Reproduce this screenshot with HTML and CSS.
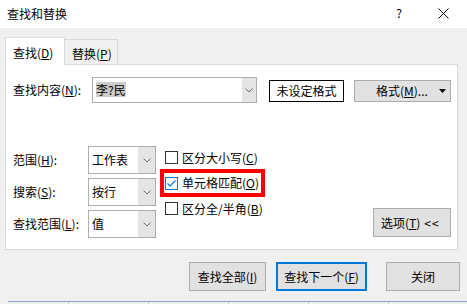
FILE: index.html
```html
<!DOCTYPE html>
<html lang="zh-CN">
<head>
<meta charset="utf-8">
<title>查找和替换</title>
<link rel="stylesheet" href="styles.css">
</head>
<body>
<div class="titlebar">
  <span class="title">查找和替换</span>
  <span class="help">?</span>
  <span class="close"><svg width="11" height="11" viewBox="0 0 11 11"><path d="M0.5 0.5L10.5 10.5M10.5 0.5L0.5 10.5" stroke="#000" stroke-width="1" fill="none"/></svg></span>
</div>
<div class="dialog">
  <div class="tabs">
    <div class="tab active">查找(<u>D</u>)</div>
    <div class="tab">替换(<u>P</u>)</div>
  </div>
  <div class="panel">
    <div class="find-row">
      <span class="find-label">查找内容(<u>N</u>):</span>
      <div class="combo find-combo">
        <span class="combo-text"><span class="sel">李?民</span></span>
        <span class="drop"><svg width="8" height="5" viewBox="0 0 8 5"><path d="M0.5 0.5L4 4L7.5 0.5" stroke="#707070" stroke-width="1" fill="none"/></svg></span>
      </div>
      <div class="format-preview">未设定格式</div>
      <button class="btn format-btn">格式(<u>M</u>)...<svg class="tri" width="7" height="4" viewBox="0 0 7 4"><path d="M0 0H7L3.5 4Z" fill="#000"/></svg></button>
    </div>
    <div class="options">
      <div class="fields">
        <span class="label">范围(<u>H</u>):</span>
        <div class="combo small-combo">
          <span class="combo-text">工作表</span>
          <span class="drop wide"><svg width="8" height="5" viewBox="0 0 8 5"><path d="M0.5 0.5L4 4L7.5 0.5" stroke="#707070" stroke-width="1" fill="none"/></svg></span>
        </div>
        <span class="label">搜索(<u>S</u>):</span>
        <div class="combo small-combo">
          <span class="combo-text">按行</span>
          <span class="drop wide"><svg width="8" height="5" viewBox="0 0 8 5"><path d="M0.5 0.5L4 4L7.5 0.5" stroke="#707070" stroke-width="1" fill="none"/></svg></span>
        </div>
        <span class="label">查找范围(<u>L</u>):</span>
        <div class="combo small-combo">
          <span class="combo-text">值</span>
          <span class="drop wide"><svg width="8" height="5" viewBox="0 0 8 5"><path d="M0.5 0.5L4 4L7.5 0.5" stroke="#707070" stroke-width="1" fill="none"/></svg></span>
        </div>
      </div>
      <div class="checks">
        <div class="check"><span class="box"></span>区分大小写(<u>C</u>)</div>
        <div class="check marked"><span class="box checked"><svg width="11" height="11" viewBox="0 0 11 11"><path d="M1.5 5.5L4 8L9.5 2.5" stroke="#0078d7" stroke-width="1.2" fill="none"/></svg></span>单元格匹配(<u>O</u>)</div>
        <div class="check"><span class="box"></span>区分全/半角(<u>B</u>)</div>
      </div>
      <button class="btn options-btn">选项(<u>T</u>)<span class="arrows">&lt;&lt;</span></button>
    </div>
  </div>
  <div class="actions">
    <button class="btn action a1">查找全部(<u>I</u>)</button>
    <button class="btn action a2 default">查找下一个(<u>F</u>)</button>
    <button class="btn action a3">关闭</button>
  </div>
</div>
<div class="taskstrip">
  <span class="cell first"></span>
  <span class="cell"></span>
  <span class="cell"></span>
  <span class="cell"></span>
  <span class="cell"></span>
  <span class="cell last"></span>
</div>
</body>
</html>
```

FILE: styles.css
```css
* { box-sizing: border-box; }
html, body { margin: 0; padding: 0; }
body {
  width: 467px;
  height: 304px;
  overflow: hidden;
  background: #f0f0f0;
  font-family: "Noto Sans CJK SC", "Microsoft YaHei", sans-serif;
  font-size: 12px;
  line-height: 16px;
  color: #000;
}
u {
  text-decoration-thickness: 1px;
  text-underline-offset: 1px;
}

.titlebar {
  height: 28px;
  background: #fff;
  display: flex;
  align-items: center;
}
.title { padding-left: 7px; margin-top: -1px; }
.help { margin-left: auto; margin-right: 36px; margin-top: -2px; }
.close { width: 11px; height: 11px; margin-right: 18px; margin-top: -2px; display: flex; }

.dialog { padding: 9px 9px 0 5px; }

.tabs { display: flex; align-items: flex-start; height: 28px; }
.tab {
  width: 53px;
  height: 25px;
  margin-top: 2px;
  border: 1px solid #d9d9d9;
  border-left: 0;
  border-bottom: 0;
  background: #f0f0f0;
  padding: 3px 0 0 7px;
  display: flex;
  align-items: center;
}
.tab.active {
  width: 60px;
  height: 28px;
  margin-top: 0;
  border-left: 1px solid #d9d9d9;
  background: #fff;
  padding: 2px 0 0 7px;
  position: relative;
  z-index: 1;
}

.panel {
  height: 186px;
  margin-top: -1px;
  border: 1px solid #d9d9d9;
  background: #fff;
}

.find-row {
  display: flex;
  align-items: flex-start;
  margin-top: 12px;
  padding-left: 7px;
}
.find-label {
  width: 79px;
  height: 26px;
  display: flex;
  align-items: center;
}
.combo {
  border: 1px solid #adadad;
  background: #fff;
  display: flex;
}
.find-combo { width: 165px; height: 26px; }
.combo-text {
  flex: 1;
  padding-left: 3px;
  display: flex;
  align-items: center;
}
.sel { background: #cccccc; line-height: 15px; margin-top: -2px; }
.drop {
  width: 14px;
  background: #e5e5e5;
  display: flex;
  align-items: center;
  justify-content: center;
}
.drop.wide { width: 17px; }
.drop svg { display: block; }

.format-preview {
  margin-left: 12px;
  margin-top: 3px;
  width: 75px;
  height: 22px;
  border: 1px solid #000;
  display: flex;
  align-items: center;
  justify-content: center;
}

.btn {
  font: inherit;
  color: #000;
  background: #e1e1e1;
  border: 1px solid #adadad;
  padding: 0;
  margin: 0;
  display: flex;
  align-items: center;
  justify-content: center;
  line-height: 16px;
}
.format-btn {
  margin-left: 10px;
  margin-top: 3px;
  width: 97px;
  height: 22px;
  justify-content: flex-start;
  padding: 0 4px 0 21px;
}
.tri { margin-left: auto; display: block; }

.options {
  display: flex;
  align-items: flex-start;
  margin-top: 43px;
  padding: 0 6px 0 7px;
}
.fields {
  display: grid;
  grid-template-columns: 75px 68px;
  grid-auto-rows: 28px;
  row-gap: 4px;
  align-items: center;
}
.label { display: block; }
.small-combo { height: 28px; }

.checks {
  display: flex;
  flex-direction: column;
  align-items: flex-start;
  gap: 12.5px;
  margin-top: 5px;
  margin-left: 9px;
}
.check {
  display: flex;
  align-items: center;
  height: 13px;
  white-space: nowrap;
}
.box {
  width: 13px;
  height: 13px;
  border: 1px solid #333;
  background: #fff;
  margin-right: 4px;
  flex-shrink: 0;
  display: flex;
}
.box.checked { border-color: #0078d7; }
.box svg { display: block; }
.marked {
  height: 20px;
  padding: 3.5px 2px 3.5px 1px;
  margin: -3.5px -2px -3.5px -1px;
  outline: 4px solid #f00;
}

.options-btn {
  margin-left: auto;
  margin-top: 62px;
  width: 78px;
  height: 29px;
  justify-content: flex-start;
  padding-left: 7px;
}
.arrows { margin-left: 4px; letter-spacing: 1px; }

.actions {
  display: flex;
  margin-top: 12px;
  padding-left: 184px;
  margin-right: -2px;
}
.action { height: 29px; }
.a1 { width: 77px; }
.a2 { width: 91px; margin-left: 10px; }
.a3 { width: 74px; margin-left: 19px; }
.default { border: 2px solid #0078d7; }

.taskstrip {
  margin-top: 10px;
  margin-left: 8px;
  height: 3px;
  border-top: 1px solid #8fa3c9;
  display: flex;
}
.cell {
  width: 80px;
  flex-shrink: 0;
  border-right: 1px solid #c6c6c6;
}
.cell.first { width: 61px; }
.cell.last { flex: 1; border-right: 0; }
```
